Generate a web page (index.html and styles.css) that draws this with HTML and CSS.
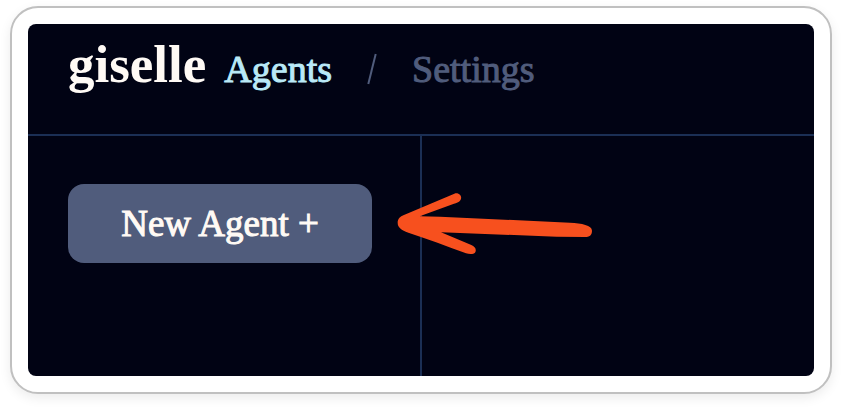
FILE: index.html
```html
<!DOCTYPE html>
<html lang="en">
<head>
<meta charset="utf-8">
<title>giselle</title>
<link rel="stylesheet" href="styles.css">
</head>
<body>
<div class="frame">
  <div class="app">
    <header class="header">
      <a class="logo" href="#">giselle</a>
      <nav class="nav">
        <a class="nav-link active" href="#">Agents</a>
        <svg class="separator" viewBox="0 0 10 32" aria-hidden="true"><path d="M1.3 31 8.7 1"/></svg>
        <a class="nav-link" href="#">Settings</a>
      </nav>
    </header>
    <main class="workspace">
      <section class="sidebar">
        <button class="new-agent" type="button">New Agent +</button>
      </section>
      <section class="content">
        <svg class="arrow" viewBox="0 0 630 225" aria-hidden="true">
          <path d="M40 91 L193 26 C207 20 220 36 210 47 C207 51 199 54 192 56 L89 94 L150 95 L540 113 C575 115 606 120 606 137 C606 151 598 156 585 156 L500 155 L153 142 L244 180 C255 184 261 194 255 203 C251 208 237 207 228 205 C170 184 110 160 55 143 C34 135 23 127 23 113 C23 101 32 94 40 91Z"/>
        </svg>
      </section>
    </main>
  </div>
</div>
</body>
</html>
```
FILE: styles.css
```css
* {
  box-sizing: border-box;
}

body {
  margin: 0;
  min-height: 100vh;
  padding: 6px 10px 14px;
  display: flex;
  background: #fff;
  font-family: "Liberation Serif", serif;
}

.frame {
  flex: 1;
  display: flex;
  padding: 16px;
  border: 2px solid #c0c0c0;
  border-radius: 28px;
  background: #fff;
  box-shadow: 0 4px 12px rgba(0, 0, 0, 0.08);
}

.app {
  flex: 1;
  display: flex;
  flex-direction: column;
  overflow: hidden;
  border-radius: 8px;
  background: #010314;
}

.header {
  display: flex;
  align-items: baseline;
  gap: 18px;
  padding: 6px 40px 36px;
  border-bottom: 2px solid #1b2f55;
}

.logo {
  color: #fffaf5;
  font-size: 53px;
  font-weight: 700;
  line-height: 68px;
  text-decoration: none;
}

.nav {
  display: flex;
  align-items: center;
  gap: 35px;
}

.nav-link {
  color: #505c7c;
  font-size: 38px;
  line-height: 48px;
  text-decoration: none;
  -webkit-text-stroke: 1px currentColor;
}

.nav-link.active {
  color: #b9e9f7;
}

.separator {
  width: 10px;
  height: 32px;
  fill: none;
  stroke: #505c7c;
  stroke-width: 2;
}

.workspace {
  flex: 1;
  display: grid;
  grid-template-columns: 1fr 1fr;
  gap: 2px;
}

.sidebar {
  padding: 48px;
  padding-left: 40px;
}

.new-agent {
  display: block;
  width: 100%;
  padding: 16px;
  border: 0;
  border-radius: 16px;
  background: #505c7c;
  color: #fffaf5;
  font-family: inherit;
  font-size: 37px;
  line-height: 47px;
  -webkit-text-stroke: 1px currentColor;
}

.content {
  position: relative;
  margin-left: -2px;
  border-left: 2px solid #1b2f55;
}

.arrow {
  position: absolute;
  top: 49px;
  left: -32px;
  width: 210px;
  height: 75px;
  fill: #f7501e;
}
```
